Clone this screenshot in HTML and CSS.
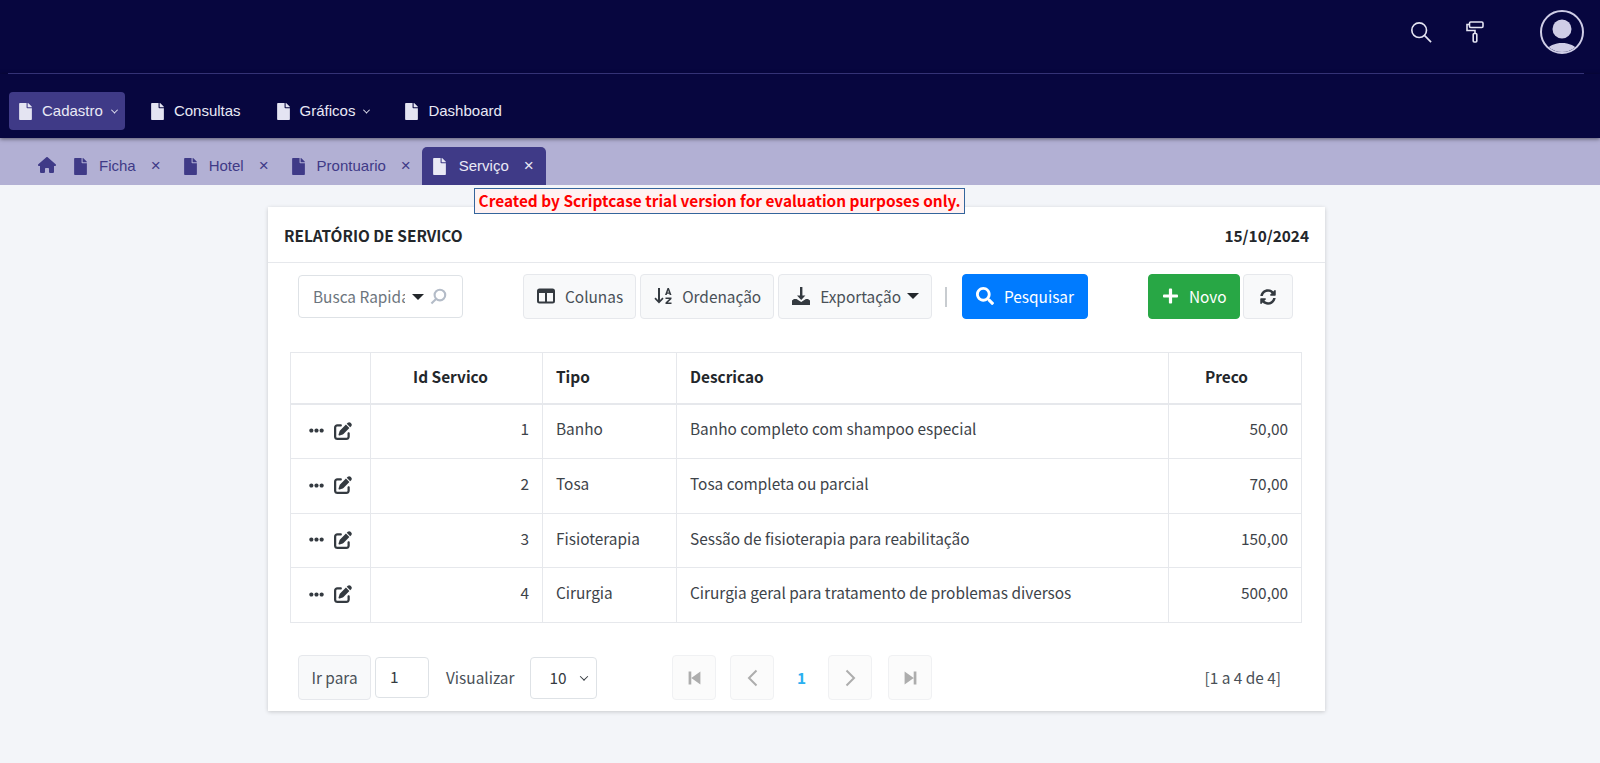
FILE: index.html
```html
<!DOCTYPE html>
<html lang="pt-BR">
<head>
    <meta charset="UTF-8">
    <title>Relatório de Servico</title>
    <link rel="stylesheet" href="styles.css">
</head>
<body>
    <svg class="sprites" xmlns="http://www.w3.org/2000/svg">
        <symbol id="i-file" viewBox="0 0 384 512"><path d="M224 136V0H24C10.7 0 0 10.7 0 24v464c0 13.3 10.7 24 24 24h336c13.3 0 24-10.7 24-24V160H248c-13.2 0-24-10.8-24-24zm160-14.1v6.1H256V0h6.1c6.4 0 12.5 2.5 17 7l97.9 98c4.5 4.5 7 10.6 7 16.9z"/></symbol>
        <symbol id="i-search" viewBox="0 0 512 512"><path d="M505 442.7L405.3 343c-4.5-4.5-10.6-7-17-7H372c27.6-35.3 44-79.7 44-128C416 93.1 322.9 0 208 0S0 93.1 0 208s93.1 208 208 208c48.3 0 92.7-16.4 128-44v16.3c0 6.4 2.5 12.5 7 17l99.7 99.7c9.4 9.4 24.6 9.4 33.9 0l28.3-28.3c9.4-9.4 9.4-24.6.1-34zM208 336c-70.7 0-128-57.2-128-128 0-70.7 57.2-128 128-128 70.7 0 128 57.2 128 128 0 70.7-57.2 128-128 128z"/></symbol>
        <symbol id="i-edit" viewBox="0 0 512 512"><path d="M471.6 21.7c-21.9-21.9-57.3-21.9-79.2 0L362.3 51.7l97.9 97.9 30.1-30.1c21.9-21.9 21.9-57.3 0-79.2L471.6 21.7zm-299.2 220c-6.1 6.1-10.8 13.6-13.5 21.9l-29.6 88.8c-2.9 8.6-.6 18.1 5.8 24.6s15.9 8.7 24.6 5.8l88.8-29.6c8.2-2.7 15.7-7.4 21.9-13.5L437.7 172.3 339.7 74.3 172.4 241.7zM96 64C43 64 0 107 0 160V416c0 53 43 96 96 96H352c53 0 96-43 96-96V320c0-17.7-14.3-32-32-32s-32 14.3-32 32v96c0 17.7-14.3 32-32 32H96c-17.7 0-32-14.3-32-32V160c0-17.7 14.3-32 32-32h96c17.7 0 32-14.3 32-32s-14.3-32-32-32H96z"/></symbol>
        <symbol id="i-dots" viewBox="0 0 512 512"><path d="M328 256c0 39.8-32.2 72-72 72s-72-32.2-72-72 32.2-72 72-72 72 32.2 72 72zm104-72c-39.8 0-72 32.2-72 72s32.2 72 72 72 72-32.2 72-72-32.2-72-72-72zm-352 0c-39.8 0-72 32.2-72 72s32.2 72 72 72 72-32.2 72-72-32.2-72-72-72z"/></symbol>
    </svg>

    <header class="topbar">
        <div class="topbar-tools">
            <svg class="tool-search" viewBox="0 0 24 24" fill="none" stroke="#e4e4f2" stroke-width="1.8"><circle cx="10" cy="10" r="8"/><path d="M16 16l7 7"/></svg>
            <svg class="tool-roller" viewBox="0 0 18 22" fill="none" stroke="#e4e4f2" stroke-width="1.6"><rect x="3.5" y="1" width="13.5" height="5.5" rx="1.2"/><path d="M3.5 3.5H1v6h8v3"/><rect x="7.2" y="12.5" width="3.6" height="8.5" rx="1"/></svg>
            <span class="avatar">
                <svg viewBox="0 0 40 40"><circle cx="20" cy="17" r="9.5" fill="#cfcde6"/><path d="M3 42c1-8 10-11 17-11s16 3 17 11z" fill="#cfcde6"/></svg>
            </span>
        </div>
    </header>

    <nav class="menu">
        <a class="menu-item active"><svg class="ico"><use href="#i-file"/></svg>Cadastro<span class="chev"></span></a>
        <a class="menu-item"><svg class="ico"><use href="#i-file"/></svg>Consultas</a>
        <a class="menu-item"><svg class="ico"><use href="#i-file"/></svg>Gráficos<span class="chev"></span></a>
        <a class="menu-item"><svg class="ico"><use href="#i-file"/></svg>Dashboard</a>
    </nav>

    <div class="tabs">
        <svg class="tab-home" viewBox="0 0 576 512"><path d="M575.8 255.5c0 18-15 32.1-32 32.1h-32l.7 160.2c0 2.7-.2 5.4-.5 8.1V472c0 22.1-17.9 40-40 40H456c-1.100 0-2.200 0-3.300-.1-1.400.1-2.800.1-4.200.1H392c-22.100 0-40-17.900-40-40V384c0-17.700-14.300-32-32-32H256c-17.700 0-32 14.300-32 32v88c0 22.100-17.900 40-40 40H128.100c-1.500 0-3-.1-4.500-.2-1.200.1-2.400.2-3.600.2H104c-22.100 0-40-17.900-40-40V360c0-.9 0-1.900.1-2.800V287.600H32c-18 0-32-14-32-32.100 0-9 3-17 10-24L266.400 8c7-7 15-8 22-8s15 2 21 7L564.800 231.500c8 7 12 15 11 24z"/></svg>
        <a class="tab"><svg class="ico"><use href="#i-file"/></svg>Ficha<span class="tab-x">×</span></a>
        <a class="tab"><svg class="ico"><use href="#i-file"/></svg>Hotel<span class="tab-x">×</span></a>
        <a class="tab"><svg class="ico"><use href="#i-file"/></svg>Prontuario<span class="tab-x">×</span></a>
        <a class="tab active"><svg class="ico"><use href="#i-file"/></svg>Serviço<span class="tab-x">×</span></a>
    </div>

    <main class="content">
        <div class="trial-note">Created by Scriptcase trial version for evaluation purposes only.</div>

        <section class="card">
            <div class="card-head">
                <span>RELATÓRIO DE SERVICO</span>
                <span>15/10/2024</span>
            </div>

            <div class="toolbar">
                <div class="quick-search">
                    <input class="qs-input" type="text" placeholder="Busca Rapida">
                    <span class="caret"></span>
                    <svg class="qs-icon" viewBox="0 0 24 24" fill="none" stroke="#b4bcc8" stroke-width="3"><circle cx="14" cy="10" r="7.5"/><path d="M8.5 15.5L2 22"/></svg>
                </div>
                <div class="btn-group">
                    <a class="btn">
                        <svg class="btn-ico" viewBox="0 0 18 16" fill="none" stroke="#343a40" stroke-width="2"><rect x="1" y="1.5" width="16" height="13" rx="1.5"/><path d="M9 2v12"/><path d="M1 3.5h16" stroke-width="3"/></svg>
                        Colunas
                    </a>
                    <a class="btn">
                        <svg class="btn-ico" viewBox="0 0 18 18" fill="#343a40"><path d="M4 1h2v12l2.4-2.4 1.2 1.2L5 16.6.4 11.8l1.2-1.2L4 13z"/><path d="M13.500 1h1.400l2.600 7h-1.800l-.4-1.200h-2.200L12.700 8H11zm.7 2.300l-.7 2.200h1.400zM11.500 10.500h6V12l-3.700 3.500h3.700V17h-6v-1.500l3.700-3.500h-3.700z"/></svg>
                        Ordenação
                    </a>
                    <a class="btn">
                        <svg class="btn-ico" viewBox="0 0 18 18" fill="#343a40"><path d="M8 0h2.400v8.500h3L9.200 13 5 8.500h3z"/><path d="M0 13.500l2-1.500h2.500l4.700 3 4.700-3H16l2 1.500V18H0z"/></svg>
                        Exportação<span class="caret"></span>
                    </a>
                </div>
                <span class="tool-sep"></span>
                <a class="btn btn-blue"><svg class="btn-ico"><use href="#i-search"/></svg>Pesquisar</a>
                <a class="btn btn-green">
                    <svg class="btn-ico" viewBox="0 0 448 512"><path d="M416 208H272V64c0-17.670-14.330-32-32-32h-32c-17.670 0-32 14.330-32 32v144H32c-17.670 0-32 14.330-32 32v32c0 17.670 14.330 32 32 32h144v144c0 17.670 14.330 32 32 32h32c17.670 0 32-14.330 32-32V304h144c17.670 0 32-14.330 32-32v-32c0-17.670-14.330-32-32-32z"/></svg>
                    Novo
                </a>
                <a class="btn btn-refresh">
                    <svg viewBox="0 0 512 512" class="refresh-ico"><path d="M370.72 133.28C339.458 104.008 298.888 87.962 255.848 88c-77.458.068-144.328 53.178-162.791 126.85-1.344 5.363-6.122 9.15-11.651 9.15H24.103c-7.498 0-13.194-6.807-11.807-14.176C33.933 94.924 134.813 8 256 8c66.448 0 126.791 26.136 171.315 68.685L463.03 40.97C478.149 25.851 504 36.559 504 57.941V192c0 13.255-10.745 24-24 24H345.941c-21.382 0-32.09-25.851-16.971-40.971l41.75-41.749zM32 296h134.059c21.382 0 32.09 25.851 16.971 40.971l-41.75 41.75c31.262 29.273 71.835 45.319 114.876 45.28 77.418-.07 144.315-53.144 162.787-126.849 1.344-5.363 6.122-9.15 11.651-9.15h57.304c7.498 0 13.194 6.807 11.807 14.176C478.067 417.076 377.187 504 256 504c-66.448 0-126.791-26.136-171.315-68.685L48.97 471.03C33.851 486.149 8 475.441 8 454.059V320c0-13.255 10.745-24 24-24z"/></svg>
                </a>
            </div>

            <table class="grid">
                <colgroup>
                    <col class="col-actions"><col class="col-id"><col class="col-tipo"><col><col class="col-preco">
                </colgroup>
                <thead>
                    <tr><th></th><th class="center">Id Servico</th><th>Tipo</th><th>Descricao</th><th class="center wide">Preco</th></tr>
                </thead>
                <tbody>
                    <tr>
                        <td class="actions"><svg class="dots"><use href="#i-dots"/></svg><svg class="edit"><use href="#i-edit"/></svg></td>
                        <td class="num">1</td><td>Banho</td><td>Banho completo com shampoo especial</td><td class="num">50,00</td>
                    </tr>
                    <tr>
                        <td class="actions"><svg class="dots"><use href="#i-dots"/></svg><svg class="edit"><use href="#i-edit"/></svg></td>
                        <td class="num">2</td><td>Tosa</td><td>Tosa completa ou parcial</td><td class="num">70,00</td>
                    </tr>
                    <tr class="row-short">
                        <td class="actions"><svg class="dots"><use href="#i-dots"/></svg><svg class="edit"><use href="#i-edit"/></svg></td>
                        <td class="num">3</td><td>Fisioterapia</td><td>Sessão de fisioterapia para reabilitação</td><td class="num">150,00</td>
                    </tr>
                    <tr>
                        <td class="actions"><svg class="dots"><use href="#i-dots"/></svg><svg class="edit"><use href="#i-edit"/></svg></td>
                        <td class="num">4</td><td>Cirurgia</td><td>Cirurgia geral para tratamento de problemas diversos</td><td class="num">500,00</td>
                    </tr>
                </tbody>
            </table>

            <div class="pager">
                <a class="btn btn-goto">Ir para</a>
                <span class="page-input">1</span>
                <span class="page-label">Visualizar</span>
                <span class="page-select">10<span class="chev"></span></span>
                <div class="page-nav">
                    <a class="page-btn"><svg viewBox="0 0 14 14"><path d="M1.500 1H4v12H1.500zM12.500 1v12L4 7z"/></svg></a>
                    <a class="page-btn"><svg viewBox="0 0 14 18" class="line"><path d="M11 1.500L3.500 9l7.500 7.500"/></svg></a>
                    <span class="page-current">1</span>
                    <a class="page-btn"><svg viewBox="0 0 14 18" class="line"><path d="M3 1.500L10.500 9 3 16.500"/></svg></a>
                    <a class="page-btn page-last"><svg viewBox="0 0 14 14"><path d="M12.500 1H10v12h2.500zM1.500 1v12L10 7z"/></svg></a>
                </div>
                <span class="page-count">[1 a 4 de 4]</span>
            </div>
        </section>
    </main>
</body>
</html>
```

FILE: styles.css
```css
* {
    box-sizing: border-box;
}
html, body {
    height: 100%;
}
body {
    margin: 0;
    background: #f3f5f9;
    color: #343a40;
    font-family: "Noto Sans CJK SC", "Source Sans Pro", sans-serif;
    font-size: 15.4px;
    line-height: 24px;
    overflow: hidden;
}
.sprites {
    display: none;
}

/* topo */
.topbar {
    height: 74px;
    padding: 0 16px 0 8px;
    background: #07063f;
}
.topbar-tools {
    height: 74px;
    border-bottom: 1px solid #3c3a87;
    display: flex;
    align-items: center;
    justify-content: flex-end;
    padding: 0 0 10px;
}
.tool-search {
    width: 22px;
    height: 22px;
    margin-right: 34px;
}
.tool-roller {
    width: 18px;
    height: 22px;
    margin-right: 56px;
}
.avatar {
    width: 44px;
    height: 44px;
    border: 2px solid #cfcde6;
    border-radius: 50%;
    overflow: hidden;
    display: block;
}
.avatar svg {
    display: block;
    width: 100%;
    height: 100%;
}

/* menu */
.menu {
    height: 64px;
    padding: 18px 9px 0;
    background: #07063f;
    display: flex;
    align-items: flex-start;
    box-shadow: 0 1px 4px rgba(0, 0, 0, 0.5);
    position: relative;
    font-family: "Liberation Sans", Arial, sans-serif;
    font-size: 15px;
    color: #e9e9f5;
}
.menu-item {
    height: 38px;
    padding: 0 10px;
    margin-right: 16px;
    border-radius: 4px;
    display: flex;
    align-items: center;
}
.menu-item.active {
    background: #3f3a87;
    margin-right: 16px;
    padding-right: 8px;
}
.ico {
    width: 13px;
    height: 17px;
    margin-right: 10px;
    fill: currentColor;
}
.menu .ico {
    fill: #e4e4f2;
    margin-right: 10px;
}
.chev {
    width: 5px;
    height: 5px;
    margin-left: 9px;
    border-right: 1px solid currentColor;
    border-bottom: 1px solid currentColor;
    transform: rotate(45deg) translate(-1px, -1px);
}

/* abas */
.tabs {
    height: 47px;
    padding: 9px 0 0 38px;
    background: #b2b0d4;
    display: flex;
    align-items: stretch;
    font-family: "Liberation Sans", Arial, sans-serif;
    font-size: 15px;
    color: #3f3a87;
}
.tab-home {
    width: 18px;
    height: 16px;
    margin: 10px 18px 0 0;
    fill: #3f3a87;
}
.tab {
    padding: 0 10px 0 0;
    margin-right: 13px;
    display: flex;
    align-items: center;
}
.tab .ico {
    margin-right: 12px;
}
.tab-x {
    margin-left: 15px;
    font-size: 17px;
}
.tab.active {
    margin-left: -12px;
    padding: 0 12px 0 11px;
    background: #3f3a87;
    color: #e9e9f5;
    border-radius: 5px 5px 0 0;
}
.tab.active .ico {
    margin-right: 13px;
}

/* conteudo */
.content {
    position: relative;
    padding: 22px 0 0 268px;
}
.trial-note {
    position: absolute;
    left: 474px;
    top: 3px;
    z-index: 2;
    height: 26px;
    width: 491px;
    border: 1px solid #34659c;
    background: #fff2f2;
    color: #f00;
    font-size: 15.4px;
    font-weight: 700;
    line-height: 22px;
    text-align: center;
    white-space: nowrap;
}
.card {
    width: 1057px;
    height: 504px;
    background: #fff;
    box-shadow: 0 1px 4px rgba(0, 0, 0, 0.18);
}
.card-head {
    height: 56px;
    padding: 0 16px;
    border-bottom: 1px solid #e6e8ec;
    display: flex;
    align-items: center;
    justify-content: space-between;
    font-weight: 700;
    color: #23272b;
}

/* barra */
.toolbar {
    height: 89px;
    padding: 11px 0 0 30px;
    display: flex;
    align-items: flex-start;
}
.quick-search {
    width: 165px;
    height: 43px;
    margin-top: 1px;
    padding: 0 7px 0 14px;
    border: 1px solid #dee2e6;
    border-radius: 4px;
    display: flex;
    align-items: center;
}
.qs-input {
    width: 92px;
    padding: 0 0 2px;
    border: 0;
    outline: 0;
    background: none;
    font: inherit;
}
.qs-input::placeholder {
    color: #6c757d;
    opacity: 1;
}
.caret {
    width: 0;
    height: 0;
    margin-left: 7px;
    border-left: 6px solid transparent;
    border-right: 6px solid transparent;
    border-top: 6px solid #23272b;
}
.btn .caret {
    margin-left: 6px;
}
.qs-icon {
    width: 17px;
    height: 17px;
    margin-left: 6px;
}
.btn-group {
    display: flex;
    gap: 4px;
    margin-left: 60px;
}
.btn {
    height: 45px;
    padding: 0 12px 2px 13px;
    background: #f8f9fa;
    border: 1px solid #e6e8ec;
    border-radius: 4px;
    display: flex;
    align-items: center;
    color: #495057;
    white-space: nowrap;
}
.btn-ico {
    width: 18px;
    height: 18px;
    margin-right: 10px;
    flex: none;
}
.tool-sep {
    width: 2px;
    height: 20px;
    margin: 13px 15px 0 13px;
    background: #c8ccd0;
}
.btn-blue {
    width: 126px;
    padding-left: 13px;
    background: #007bff;
    border-color: #007bff;
    color: #fff;
}
.btn-blue .btn-ico {
    fill: #fff;
}
.btn-green {
    width: 92px;
    margin-left: 60px;
    padding-left: 14px;
    background: #28a745;
    border-color: #28a745;
    color: #fff;
}
.btn-green .btn-ico {
    width: 15px;
    margin-right: 11px;
    fill: #fff;
}
.btn-refresh {
    width: 50px;
    margin-left: 3px;
    padding: 0;
    justify-content: center;
}
.refresh-ico {
    width: 16px;
    height: 16px;
    fill: #343a40;
}

/* tabela */
.grid {
    width: 1012px;
    margin-left: 22px;
    border-collapse: collapse;
    table-layout: fixed;
}
.col-actions {
    width: 80px;
}
.col-id {
    width: 172px;
}
.col-tipo {
    width: 134px;
}
.col-preco {
    width: 133px;
}
.grid th, .grid td {
    border: 1px solid #e6e8ec;
    padding: 0 13px;
    text-align: left;
    white-space: nowrap;
}
.grid th {
    height: 51px;
    padding-bottom: 3px;
    border-bottom-width: 2px;
    font-weight: 700;
    color: #23272b;
}
.grid td {
    height: 55px;
    padding-bottom: 6px;
    color: #3d4349;
}
.grid .row-short td {
    height: 54px;
}
.grid .center {
    padding-right: 25px;
    text-align: center;
}
.grid .center.wide {
    padding-right: 30px;
}
.grid .num {
    text-align: right;
}
.grid .actions {
    padding: 0 0 7px 18px;
}
.dots {
    width: 15px;
    height: 15px;
    fill: #343a40;
    vertical-align: middle;
    margin-right: 10px;
}
.edit {
    width: 18px;
    height: 18px;
    fill: #343a40;
    vertical-align: middle;
}

/* rodape */
.pager {
    height: 45px;
    margin: 32px 0 0 30px;
    display: flex;
    align-items: center;
    color: #495057;
}
.btn-goto {
    width: 73px;
    padding: 0 0 2px;
    justify-content: center;
}
.page-input {
    width: 54px;
    height: 41px;
    margin-left: 4px;
    padding-left: 14px;
    border: 1px solid #dee2e6;
    border-radius: 4px;
    line-height: 37px;
    color: #343a40;
}
.page-label {
    margin: 0 0 2px 17px;
}
.page-select {
    width: 67px;
    height: 42px;
    margin-left: 16px;
    padding: 0 9px 2px 18px;
    border: 1px solid #dee2e6;
    border-radius: 4px;
    display: flex;
    align-items: center;
    justify-content: space-between;
    color: #343a40;
}
.page-select .chev {
    width: 6px;
    height: 6px;
    margin-top: 3px;
}
.page-nav {
    display: flex;
    align-items: center;
    margin-left: 75px;
    gap: 14px;
}
.page-btn {
    width: 44px;
    height: 45px;
    background: #fbfbfb;
    border: 1px solid #f0f1f3;
    border-radius: 4px;
    display: flex;
    align-items: center;
    justify-content: center;
}
.page-last {
    margin-left: 2px;
}
.page-btn svg {
    width: 15px;
    height: 16px;
    fill: #adadad;
}
.page-btn svg.line {
    height: 18px;
    fill: none;
    stroke: #adadad;
    stroke-width: 2;
}
.page-current {
    width: 26px;
    margin-bottom: 2px;
    text-align: center;
    font-size: 15.4px;
    font-weight: 700;
    color: #2bb0f0;
}
.page-count {
    margin: 0 0 2px 272px;
    color: #495057;
}
```
